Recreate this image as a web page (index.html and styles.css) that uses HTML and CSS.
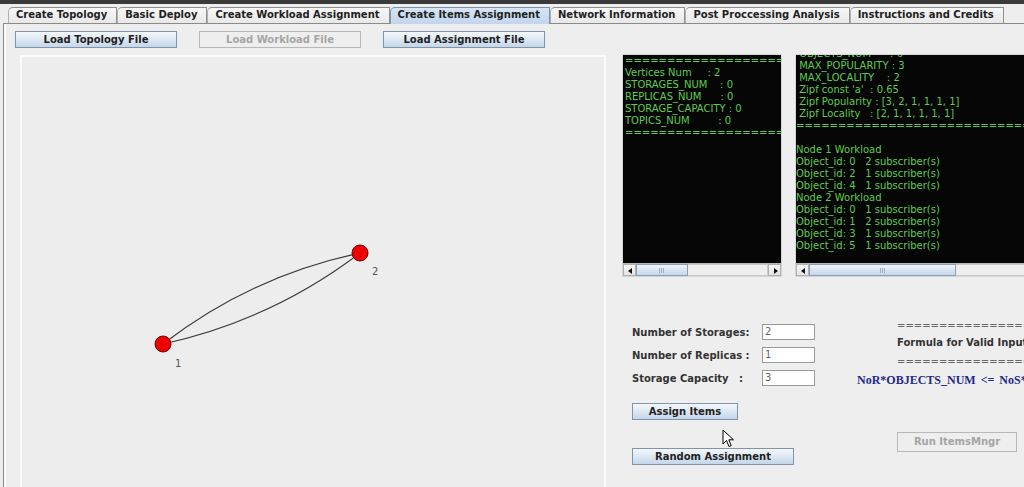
FILE: index.html
```html
<!DOCTYPE html>
<html>
<head>
<meta charset="utf-8">
<link rel="stylesheet" href="styles.css">
</head>
<body>
<div class="topbar"></div>
<div class="tabs">
  <div class="tab">Create Topology</div>
  <div class="tab">Basic Deploy</div>
  <div class="tab">Create Workload Assignment</div>
  <div class="tab selected">Create Items Assignment</div>
  <div class="tab">Network Information</div>
  <div class="tab">Post Proccessing Analysis</div>
  <div class="tab">Instructions and Credits</div>
</div>
<div class="panel">
  <div class="btnrow">
    <div class="btn wide">Load Topology File</div>
    <div class="btn wide disabled">Load Workload File</div>
    <div class="btn wide">Load Assignment File</div>
  </div>
  <div class="work">
    <div class="canvas">
      <svg class="graph" width="582" height="428" viewBox="0 0 582 428">
        <path d="M141 287 Q229 219 338 196" fill="none" stroke="#3c3c3c" stroke-width="1.2"/>
        <path d="M141 287 Q250 263 338 196" fill="none" stroke="#3c3c3c" stroke-width="1.2"/>
        <circle cx="141" cy="287" r="8" fill="#ee0000" stroke="#7a0000" stroke-width="1"/>
        <circle cx="338" cy="196" r="8" fill="#ee0000" stroke="#7a0000" stroke-width="1"/>
        <text x="153" y="310" class="nlabel">1</text>
        <text x="350" y="218" class="nlabel">2</text>
      </svg>
    </div>
    <div class="side">
      <div class="terms">
        <div class="term t1">
          <div class="screen"><pre class="out">==================================
Vertices Num     : 2
STORAGES_NUM    : 0
REPLICAS_NUM      : 0
STORAGE_CAPACITY : 0
TOPICS_NUM         : 0
==================================</pre></div>
          <div class="hscroll">
            <div class="arrow left"></div>
            <div class="thumb th1"><span class="grip"></span></div>
            <div class="track"></div>
            <div class="arrow right"></div>
          </div>
        </div>
        <div class="term t2">
          <div class="screen"><pre class="out shifted"> OBJECTS_NUM      : 6
 MAX_POPULARITY : 3
 MAX_LOCALITY    : 2
 Zipf const 'a'  : 0.65
 Zipf Popularity : [3, 2, 1, 1, 1, 1]
 Zipf Locality   : [2, 1, 1, 1, 1, 1]
==================================================

Node 1 Workload
Object_id: 0   2 subscriber(s)
Object_id: 2   1 subscriber(s)
Object_id: 4   1 subscriber(s)
Node 2 Workload
Object_id: 0   1 subscriber(s)
Object_id: 1   2 subscriber(s)
Object_id: 3   1 subscriber(s)
Object_id: 5   1 subscriber(s)</pre></div>
          <div class="hscroll">
            <div class="arrow left"></div>
            <div class="thumb th2"><span class="grip"></span></div>
            <div class="track"></div>
          </div>
        </div>
      </div>
      <div class="lower">
        <div class="form">
          <div class="frow"><span class="flabel">Number of Storages:</span><span class="field">2</span></div>
          <div class="frow"><span class="flabel">Number of Replicas :</span><span class="field">1</span></div>
          <div class="frow"><span class="flabel">Storage Capacity &nbsp; :</span><span class="field">3</span></div>
          <div class="btn assign">Assign Items</div>
          <div class="btn random">Random Assignment</div>
        </div>
        <div class="formula">
          <div class="eq l1">==============================</div>
          <div class="ftitle">Formula for Valid Input</div>
          <div class="eq l3">==============================</div>
          <div class="fexpr">NoR*OBJECTS_NUM &lt;= NoS*Storage_Capacity</div>
          <div class="btn disabled run">Run ItemsMngr</div>
        </div>
      </div>
    </div>
  </div>
</div>
<svg class="cursor" width="13" height="19" viewBox="0 0 13 19">
  <path d="M1 1 L1 15 L4.5 11.5 L7 17.5 L9.2 16.6 L6.8 10.8 L11.5 10.8 Z" fill="#ffffff" stroke="#000000" stroke-width="1" stroke-linejoin="round"/>
</svg>
</body>
</html>
```

FILE: styles.css
```css
* { box-sizing: border-box; }
html, body {
  margin: 0;
  padding: 0;
}
body {
  width: 1024px;
  height: 487px;
  overflow: hidden;
  background: #eeeeee;
  font-family: "DejaVu Sans", sans-serif;
  font-size: 10px;
  color: #222;
  position: relative;
}
.topbar {
  height: 4px;
  background: #3a3a3a;
}
.tabs {
  height: 19px;
  display: flex;
  align-items: flex-end;
  padding-left: 8px;
  position: relative;
  z-index: 1;
}
.tab {
  height: 16px;
  line-height: 14px;
  padding: 0 9px 0 7px;
  font-weight: bold;
  color: #222;
  background: linear-gradient(#f7f7f7, #e8e8e8);
  border: 1px solid #8f8f8f;
  border-bottom: none;
  border-left-color: #b0b0b0;
  border-top-left-radius: 5px;
  margin-right: 0;
  white-space: nowrap;
}
.tab.selected {
  background: linear-gradient(#d7e5f4, #c1d5ec);
  border-color: #7d93ab;
  height: 17px;
  margin-bottom: -1px;
}
.panel {
  margin-left: 3px;
  border-left: 1px solid #8a8a8a;
  border-top: 1px solid #8a8a8a;
  height: 464px;
  box-shadow: inset 2px 0 0 #fafafa;
}
.btnrow {
  display: flex;
  gap: 22px;
  padding: 7px 0 0 11px;
}
.btn {
  height: 17px;
  line-height: 15px;
  text-align: center;
  font-weight: bold;
  color: #222;
  border: 1px solid #8294a7;
  background: linear-gradient(#f3f7fb 0%, #dfe9f4 45%, #c4d6ea 100%);
  white-space: nowrap;
}
.btn.wide { width: 162px; }
.btn.disabled {
  color: #a5a5a5;
  background: #eeeeee;
  border-color: #b8b8b8;
}
.work {
  display: flex;
  margin-top: 6px;
}
.canvas {
  position: relative;
  margin-left: 16px;
  margin-top: 1px;
  width: 586px;
  height: 432px;
  background: #ededed;
  border: 2px solid #fbfbfb;
  border-bottom: none;
}
.graph {
  position: absolute;
  left: 0;
  top: 0;
}
.nlabel {
  font-family: "DejaVu Sans", sans-serif;
  font-size: 10px;
  fill: #555;
}
.side {
  margin-left: 16px;
  width: 402px;
  overflow: hidden;
}
.terms {
  display: flex;
  gap: 13px;
  height: 223px;
}
.term {
  flex: none;
  height: 223px;
  border: 1px solid #d4d4d4;
  display: flex;
  flex-direction: column;
  background: #eeeeee;
}
.t1 { width: 160px; }
.t2 { width: 262px; }
.screen {
  flex: 1;
  background: #060606;
  overflow: hidden;
}
.out {
  margin: 0;
  padding: 0 0 0 2px;
  font-family: "DejaVu Sans", sans-serif;
  font-size: 10px;
  line-height: 12px;
  color: #5ccc4e;
  white-space: pre;
}
.out.shifted {
  margin-top: -7px;
  padding-left: 0;
}
.hscroll {
  height: 13px;
  display: flex;
  background: #eeeeee;
  border-top: 1px solid #b8b8b8;
}
.arrow {
  width: 13px;
  flex: none;
  position: relative;
  background: linear-gradient(#f8f8f8, #e4e4e4);
  border: 1px solid #b0b0b0;
}
.arrow::after {
  content: "";
  position: absolute;
  top: 3px;
  width: 0;
  height: 0;
  border-top: 3px solid transparent;
  border-bottom: 3px solid transparent;
}
.arrow.left::after {
  left: 4px;
  border-right: 4px solid #111;
}
.arrow.right::after {
  left: 5px;
  border-left: 4px solid #111;
}
.thumb {
  flex: none;
  position: relative;
  border: 1px solid #8aa0b8;
  background: linear-gradient(#f2f6fb, #d9e5f2 50%, #c7d8eb);
}
.th1 { width: 52px; }
.th2 { width: 147px; }
.grip {
  position: absolute;
  left: 50%;
  top: 3px;
  width: 5px;
  height: 5px;
  margin-left: -3px;
  border-left: 1px solid #9aaec4;
  border-right: 1px solid #9aaec4;
}
.grip::after {
  content: "";
  position: absolute;
  left: 1px;
  top: 0;
  width: 1px;
  height: 5px;
  background: #9aaec4;
}
.track {
  flex: 1;
  border: 1px solid #c8c8c8;
  border-left: none;
  background: #eeeeee;
}
.lower {
  display: flex;
}
.form {
  width: 235px;
  padding-left: 10px;
  padding-top: 47px;
  display: flex;
  flex-direction: column;
  align-items: flex-start;
}
.frow {
  display: flex;
  align-items: center;
  height: 16px;
  margin-bottom: 7px;
}
.flabel {
  width: 130px;
  font-weight: bold;
  color: #333;
  white-space: nowrap;
}
.field {
  width: 53px;
  height: 16px;
  line-height: 14px;
  background: #ffffff;
  border: 1px solid #9a9a9a;
  padding-left: 2px;
  color: #666;
}
.assign {
  width: 106px;
  margin-top: 10px;
}
.random {
  width: 162px;
  margin-top: 28px;
}
.formula {
  flex: 1;
  padding-top: 41px;
  white-space: nowrap;
  overflow: hidden;
}
.eq {
  padding-left: 40px;
  color: #666;
  height: 16px;
  line-height: 16px;
  overflow: hidden;
}
.l3 { height: 18px; line-height: 20px; }
.ftitle {
  padding-left: 40px;
  font-weight: bold;
  color: #333;
  height: 18px;
  line-height: 18px;
}
.fexpr {
  font-family: "Liberation Serif", "DejaVu Serif", serif;
  font-weight: bold;
  font-size: 12px;
  color: #1e2a8c;
  height: 20px;
  line-height: 20px;
  word-spacing: 2px;
}
.run {
  margin-left: 40px;
  margin-top: 42px;
  width: 120px;
  height: 20px;
  line-height: 18px;
}
.cursor {
  position: absolute;
  left: 722px;
  top: 429px;
}
```
